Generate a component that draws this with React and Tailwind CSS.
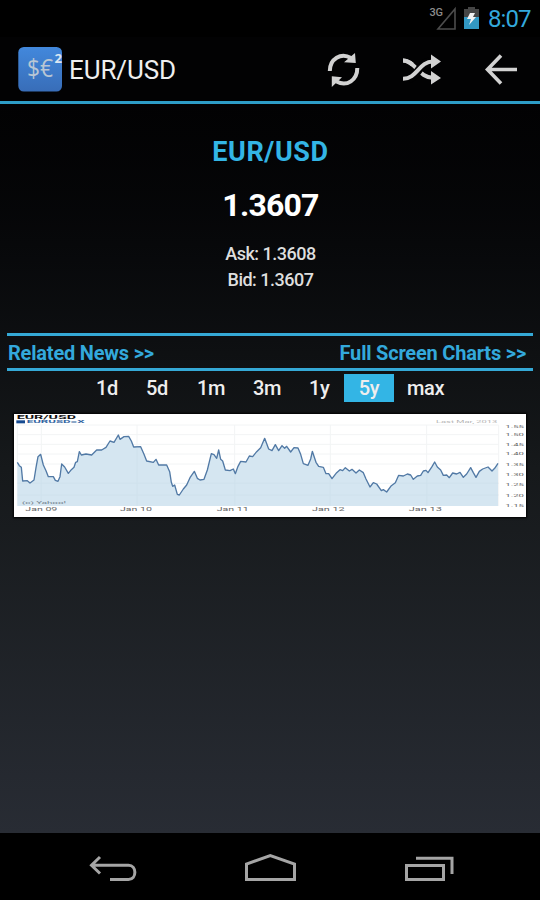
import React from 'react';

const LINE =
  '52,172 58,182 64,187 68,228 82,227 90,234 102,225 108,188 114,155 122,148 130,180 138,197 145,215 160,215 166,226 174,229 180,215 185,177 194,186 205,205 214,194 222,187 227,172 232,170 238,140 244,150 258,147 275,150 290,135 305,135 318,127 330,108 342,112 355,90 360,103 372,95 386,94 394,108 401,126 422,125 432,148 440,168 460,172 468,163 476,180 500,180 509,200 514,232 518,244 524,240 532,268 538,270 550,252 560,240 570,218 583,199 592,220 600,225 612,223 622,195 634,146 642,149 650,160 656,135 662,163 668,168 676,195 690,197 700,192 706,206 714,184 722,169 738,171 748,153 758,155 770,140 782,128 794,100 806,132 816,137 826,119 836,137 846,122 854,130 860,124 872,141 882,128 894,129 902,148 910,176 924,181 932,162 937,139 948,172 956,184 970,187 978,206 986,206 996,221 1010,203 1020,194 1028,197 1036,188 1048,198 1056,193 1068,204 1078,195 1090,203 1098,222 1110,246 1120,233 1130,237 1144,257 1150,254 1160,261 1174,242 1186,233 1196,211 1210,213 1222,207 1232,210 1240,223 1252,213 1262,211 1270,198 1278,196 1284,203 1296,185 1304,171 1312,186 1322,195 1330,211 1340,210 1348,218 1358,204 1370,207 1380,202 1390,217 1400,207 1412,188 1420,203 1428,217 1438,199 1448,192 1464,186 1476,198 1484,190 1494,175';

function BarText({ children, x, y, w, size = 14, fill = '#666', weight = 400 }) {
  return (
    <text x={x} y={y} textLength={w} lengthAdjust="spacingAndGlyphs" fontSize={size} fontWeight={weight} fill={fill}>
      {children}
    </text>
  );
}

function Chart() {
  const scale = ['1.55', '1.50', '1.45', '1.40', '1.35', '1.30', '1.25', '1.20', '1.15'];
  const ys = [68, 94, 122, 151, 182, 213, 243, 275, 305];
  return (
    <svg className="block h-[103px] w-[512px] bg-white shadow-[0_0_2px_1px_#000]" viewBox="42 27 1536 309" fontFamily="Roboto, sans-serif">
      <g stroke="#f2f4f5" strokeWidth="3">
        <path d="M52 60H1496M52 89H1496M52 118H1496M52 147H1496M52 177H1496" />
        <path d="M52 60V303M124 60V303M411 60V303M704 60V303M991 60V303M1280 60V303M1496 60V303" />
      </g>
      <polygon points={`52,303 ${LINE} 1494,303`} fill="#d5e6f1" />
      <path d="M124 155V303M411 130V303M704 210V303M991 220V303M1280 200V303M52 235H1496M52 270H1496" stroke="#c9dce8" strokeWidth="2" opacity=".5" />
      <polyline points={LINE} fill="none" stroke="#5179a5" strokeWidth="4" strokeLinejoin="round" />
      <BarText x={50} y={41} w={178} size={15} weight={700} fill="#111">EUR/USD</BarText>
      <rect x="49" y="46" width="26" height="9" fill="#164b91" />
      <BarText x={80} y={55} w={174} size={13} weight={700} fill="#3264a2">EURUSD=X</BarText>
      <BarText x={66} y={298} w={132} size={12} fill="#71818c">(c) Yahoo!</BarText>
      <BarText x={1308} y={55} w={184} size={12} fill="#b4b4b4">Last Mar, 2013</BarText>
      <BarText x={76} y={319} w={96}>Jan 09</BarText>
      <BarText x={360} y={319} w={96}>Jan 10</BarText>
      <BarText x={650} y={319} w={96}>Jan 11</BarText>
      <BarText x={936} y={319} w={98}>Jan 12</BarText>
      <BarText x={1226} y={319} w={100}>Jan 13</BarText>
      {scale.map((s, i) => (
        <BarText key={s} x={1516} y={ys[i]} w={56} size={13}>{s}</BarText>
      ))}
    </svg>
  );
}

function StatusBar() {
  return (
    <div className="flex h-[37px] justify-end bg-black">
      <svg className="h-[37px] w-[56px]" viewBox="425 0 56 37">
        <text x="429.5" y="16" fontSize="11" fontWeight="500" textLength="13.5" fill="#8c8c8c">3G</text>
        <path d="M438 29H455V9Z" fill="none" stroke="#4c4c4c" strokeWidth="1.6" />
        <path d="M464 9H468V7H475V9H479V17H464Z" fill="#454545" />
        <path d="M464 17H479V29H464Z" fill="#3298c3" />
        <path d="M470 13H475L473 17H476L469 25L471 19H467Z" fill="#f2f2f2" />
      </svg>
      <div className="w-[59px] pl-[7px] pt-[3px] text-[24px] leading-8 tracking-[-0.9px] text-[#33a9dc]">8:07</div>
    </div>
  );
}

function ActionBar() {
  return (
    <header className="flex h-[67px] items-center border-b-[3px] border-[#2d9dc7] bg-[#020203] pl-[18px]">
      <svg className="h-[46px] w-[45px] shrink-0" viewBox="18 46 45 46">
        <defs>
          <linearGradient id="tile" x2="0" y2="1">
            <stop stopColor="#4288dc" />
            <stop offset="1" stopColor="#386db8" />
          </linearGradient>
        </defs>
        <rect x="18.3" y="47" width="43.7" height="44.5" rx="5.5" fill="url(#tile)" />
        <text x="27" y="76.5" fontSize="25" textLength="26" lengthAdjust="spacingAndGlyphs" fill="#b9c6d4" fontFamily="'Open Sans', sans-serif">$€</text>
        <text x="54.5" y="62.5" fontSize="13" fontWeight="700" textLength="7.5" lengthAdjust="spacingAndGlyphs" fill="#dce7f2" fontFamily="'Open Sans', sans-serif">2</text>
      </svg>
      <h1 className="w-[255px] pl-[6px] pt-[2px] text-[26px] tracking-[-0.1px] text-[#efefef]">EUR/USD</h1>
      <svg className="h-[64px] w-[222px] shrink-0" viewBox="318 37 222 64" fill="none" stroke="#d2d2d2" strokeWidth="4">
        <path d="M329.8 71C329.8 59 341 52 351 58" />
        <path d="M357.3 68C357.3 80 347 87 336.5 81.5" />
        <path d="M355 53L355.8 63L344 62.3ZM331.8 87V76.3L342 77.3Z" fill="#d2d2d2" stroke="none" />
        <path d="M403 60.5C415 60.5 419 78 433 77.8" />
        <path d="M409 79C417 77.5 420 62.5 429 61.5" stroke="#020203" strokeWidth="8" />
        <path d="M403 78.8C417 79 419 61.5 433 61.5" />
        <path d="M431 54.5L441 61.5L431 68.5ZM431 71L441 78L431 84.5Z" fill="#d2d2d2" stroke="none" />
        <path d="M403 60.5C407 60.5 410 62.2 412.5 64.5" />
        <path d="M517 69.5H488M501 55.5L487.5 69.5L501 83.5" strokeWidth="3.6" />
      </svg>
    </header>
  );
}

function Ranges() {
  return (
    <div className="flex h-[43px] items-start pt-[3px] text-[20px] leading-[28px] font-medium tracking-[-0.3px] text-[#eeeeee]">
      <span className="ml-[89px] w-[50px]">1d</span>
      <span className="w-[51px]">5d</span>
      <span className="w-[56px]">1m</span>
      <span className="w-[56px]">3m</span>
      <span className="w-[35px]">1y</span>
      <span className="mr-[13px] w-[50px] bg-[#33b5e5] text-center">5y</span>
      <span>max</span>
    </div>
  );
}

function NavBar() {
  return (
    <nav className="h-[67px] bg-black">
      <svg className="block h-[67px] w-full" viewBox="0 833 540 67" fill="none" stroke="#a5a5a5" strokeWidth="3">
        <path d="M92 865.2H128.5C137 865.2 137 879.5 128.5 879.5H110M100 857L91.5 865.2L100 873.5" />
        <path d="M246.5 879.5V864L270.3 855.5L294.5 864V879.5Z" />
        <path d="M406.5 865.5H443.5V879.5H406.5ZM416 858.2H452V874" />
      </svg>
    </nav>
  );
}

export default function App() {
  return (
    <div className="flex h-[900px] w-[540px] flex-col overflow-hidden bg-black font-['Roboto',sans-serif]">
      <StatusBar />
      <ActionBar />
      <main className="flex flex-1 flex-col bg-linear-to-b from-[#020203] via-[#16191b] to-[#282c34] px-[7px]">
        <section className="h-[229px] pt-[30px] pl-[1px] text-center">
          <h2 className="text-[27px] leading-9 font-bold tracking-[0.6px] text-[#33b5e5]">EUR/USD</h2>
          <p className="mt-[17px] text-[32px] leading-9 font-bold tracking-[-0.8px] text-white">1.3607</p>
          <p className="mt-[18px] text-[18px] leading-[26px] font-medium tracking-[-0.5px] text-[#dedede]">Ask: 1.3608<br />Bid: 1.3607</p>
        </section>
        <div className="flex h-[38px] items-center justify-between border-y-[3px] border-[#35a9d6] pt-[2px] pr-[7px] pl-[1px] text-[20px] font-bold tracking-[-0.2px] text-[#33a9dc]">
          <span>Related News &gt;&gt;</span>
          <span>Full Screen Charts &gt;&gt;</span>
        </div>
        <Ranges />
        <div className="ml-[7px]">
          <Chart />
        </div>
      </main>
      <NavBar />
    </div>
  );
}
